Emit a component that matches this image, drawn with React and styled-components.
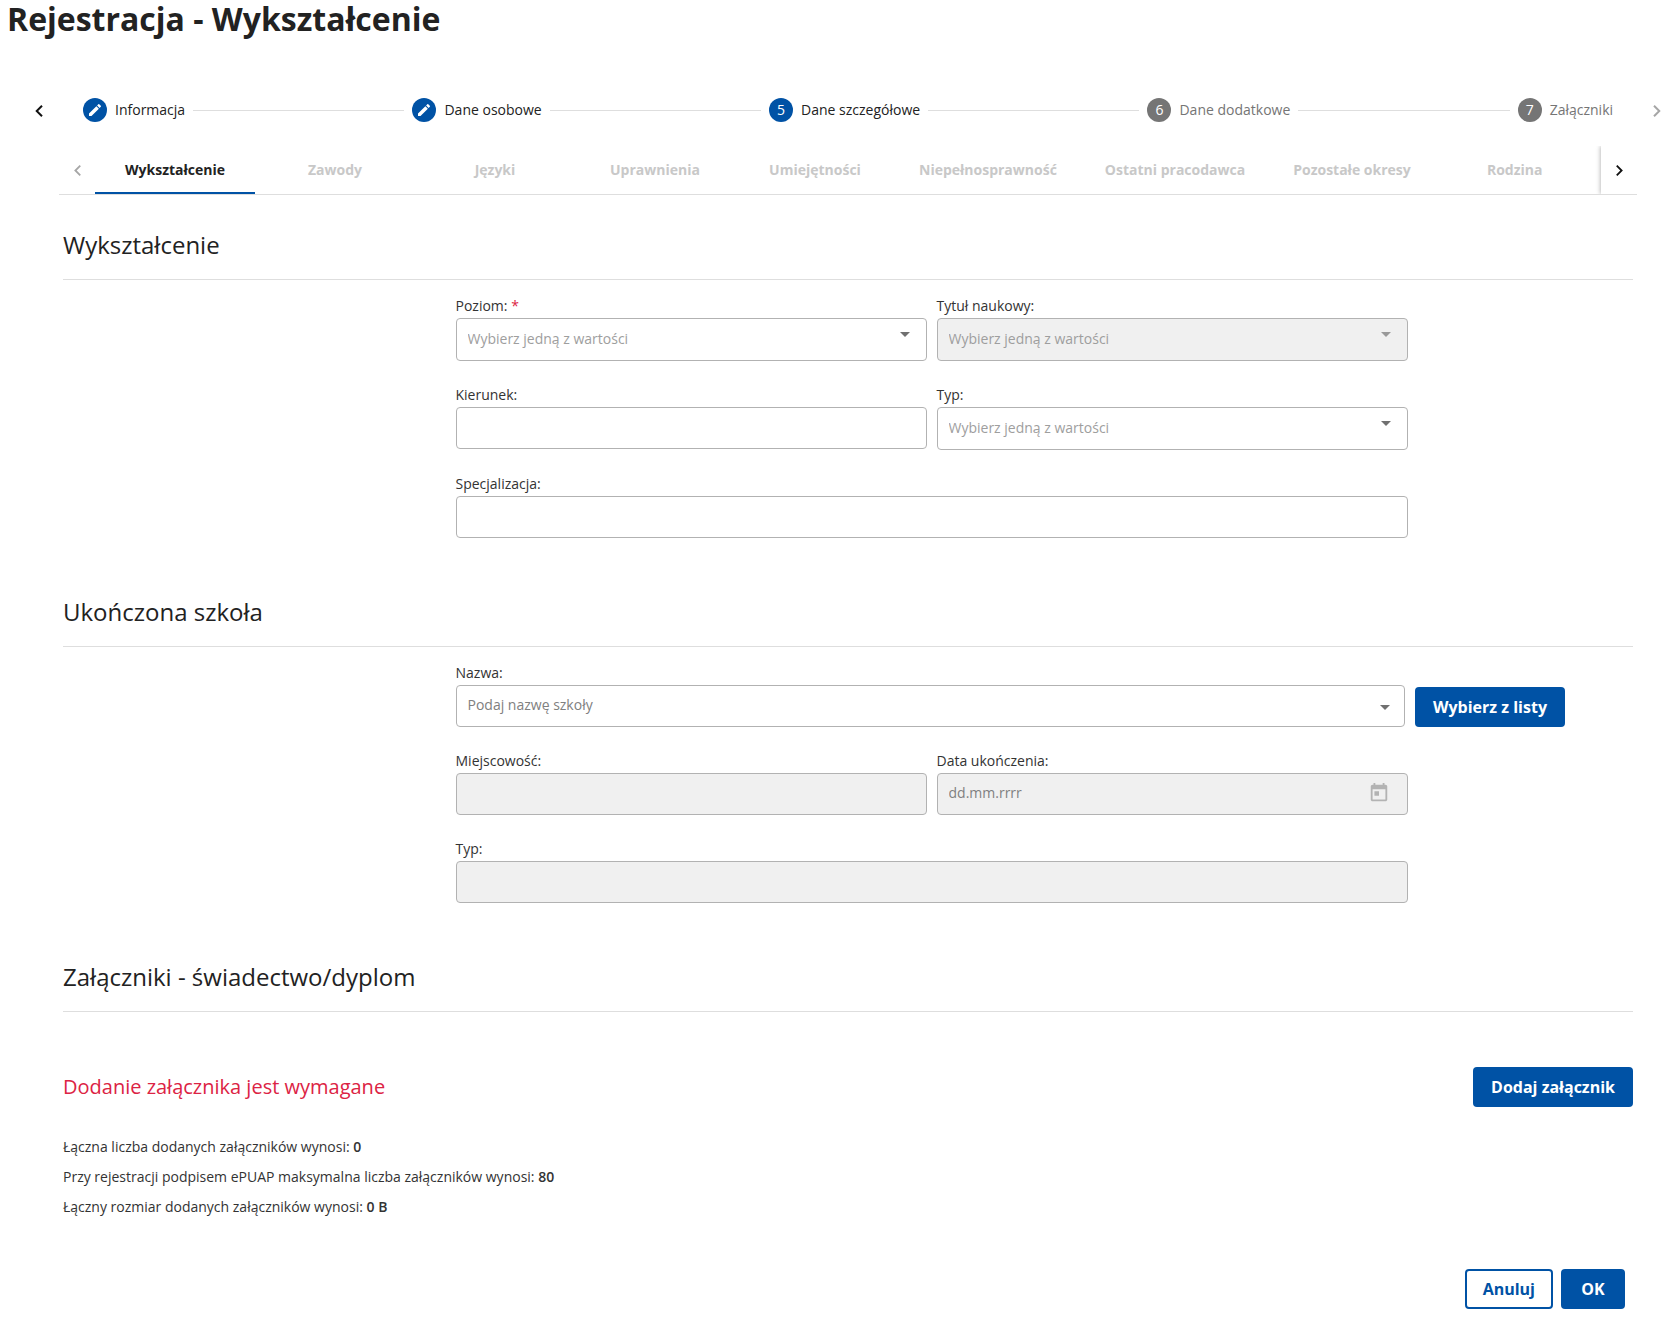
import React from 'react';
import styled, { createGlobalStyle } from 'styled-components';

const blue = '#0052a5';
const ink = '#222222';
const softInk = '#333333';
const line = '#dedede';
const red = '#dc2344';

const GlobalStyle = createGlobalStyle`
  *, *::before, *::after { box-sizing: border-box; }
  body {
    margin: 0;
    background: #ffffff;
    color: ${ink};
    font-family: "Open Sans", "Noto Sans", sans-serif;
    font-size: 14px;
    line-height: 22px;
  }
  button, input, select { font: inherit; color: inherit; }
`;

const PageTitle = styled.h1`
  margin: 0 0 60px;
  padding: 0 7px;
  font-size: 32px;
  line-height: 38px;
  font-weight: 700;
`;

const IconButton = styled.button`
  display: flex;
  align-items: center;
  justify-content: center;
  flex: none;
  width: 14px;
  height: 24px;
  padding: 2px 0 0;
  border: 0;
  background: none;
  color: ${(p) => (p.disabled ? '#a6a6a6' : '#111111')};
`;

const StepperBar = styled.nav`
  display: flex;
  align-items: center;
  gap: 37px;
  padding-left: 32px;
`;

const StepList = styled.ol`
  display: flex;
  align-items: center;
  flex: 1;
  gap: 8px;
  min-width: 0;
  margin: 0;
  padding: 0;
  list-style: none;
`;

const Step = styled.li`
  display: flex;
  align-items: center;
  gap: 8px;
  flex: ${(p) => (p.$last ? 'none' : 'auto')};
  color: ${(p) => (p.$upcoming ? '#757575' : ink)};
  white-space: nowrap;

  &:not(:last-child)::after {
    content: '';
    flex: 1;
    border-top: 1px solid ${line};
  }
`;

const StepBadge = styled.span`
  display: flex;
  align-items: center;
  justify-content: center;
  width: 24px;
  height: 24px;
  border-radius: 50%;
  background: ${(p) => (p.$upcoming ? '#757575' : blue)};
  color: #ffffff;
`;

const TabBar = styled.div`
  display: flex;
  margin: 24px 27px 0 59px;
  border-bottom: 1px solid ${line};
`;

const TabPager = styled(IconButton)`
  width: 36px;
  height: 48px;
  padding: 0;
  background: #ffffff;
  box-shadow: ${(p) => (p.disabled ? 'none' : '-1px 0 4px rgba(0, 0, 0, 0.25)')};
  clip-path: inset(0 0 0 -8px);
`;

const TabList = styled.div`
  display: flex;
  flex: 1;
  min-width: 0;
  overflow: hidden;
`;

const Tab = styled.button`
  flex: none;
  min-width: 160px;
  height: 48px;
  padding: 2px 24px 0;
  border: 0;
  border-bottom: 2px solid ${(p) => (p.$active ? blue : 'transparent')};
  background: none;
  font-weight: 700;
  color: ${(p) => (p.$active ? ink : '#c8c8c8')};
  white-space: nowrap;
`;

const Content = styled.main`
  padding: 34px 31px 14px 63px;
`;

const Section = styled.section`
  & + & { margin-top: 58px; }
`;

const SectionTitle = styled.h2`
  margin: 0;
  padding-bottom: 18px;
  border-bottom: 1px solid ${line};
  font-size: 24px;
  line-height: 32px;
  font-weight: 400;
`;

const FieldGrid = styled.div`
  display: grid;
  grid-template-columns: 40% 40%;
  column-gap: 10px;
  row-gap: 24px;
  padding: ${(p) => (p.$continued ? 0 : 16)}px 0 0 25%;
`;

const Wide = styled.div`
  grid-column: 1 / -1;
`;

const SchoolRow = styled.div`
  display: flex;
  align-items: flex-end;
  gap: 10px;
  padding: 16px 68px 24px 25%;
`;

const FieldBox = styled.div`
  display: flex;
  flex-direction: column;
  flex: 1;
  min-width: 0;
`;

const Label = styled.label`
  padding-bottom: 2px;
  line-height: 20px;
  color: ${softInk};
`;

const Required = styled.span`
  color: ${red};
`;

const Control = styled.div`
  position: relative;
  display: flex;
`;

const TextInput = styled.input`
  width: 100%;
  height: 42px;
  padding: 0 11px 4px;
  border: 1px solid #b2b2b2;
  border-radius: 4px;
  background: #ffffff;

  &::placeholder { color: #808080; opacity: 1; }
  &:disabled { background: #f0f0f0; }
`;

const Select = styled.select`
  width: 100%;
  height: 43px;
  padding: 0 11px 2px;
  border: 1px solid #b2b2b2;
  border-radius: 4px;
  background: #ffffff;
  color: #9e9e9e;
  appearance: none;

  &:disabled { background: #f0f0f0; opacity: 1; }
`;

const Adornment = styled.span`
  position: absolute;
  top: ${(p) => p.$top}px;
  right: ${(p) => p.$right}px;
  display: flex;
  color: ${(p) => (p.$muted ? '#999999' : '#707070')};
  pointer-events: none;
`;

const DateButton = styled.button`
  position: absolute;
  top: 9px;
  right: 18px;
  display: flex;
  padding: 0;
  border: 0;
  background: none;
  color: #b3b3b3;
`;

const Button = styled.button`
  flex: none;
  min-width: 64px;
  height: 40px;
  padding: 0 ${(p) => (p.$outlined ? 16 : 18)}px;
  border: ${(p) => (p.$outlined ? `2px solid ${blue}` : '0')};
  border-radius: 4px;
  background: ${(p) => (p.$outlined ? '#ffffff' : blue)};
  color: ${(p) => (p.$outlined ? blue : '#ffffff')};
  font-size: 16px;
  font-weight: 700;
  white-space: nowrap;
`;

const AttachmentBar = styled.div`
  display: flex;
  align-items: center;
  justify-content: space-between;
  margin: 55px 0 25px;
`;

const Warning = styled.p`
  margin: 0;
  font-size: 20px;
  line-height: 28px;
  color: ${red};
`;

const Summary = styled.p`
  margin: 0;
  line-height: 30px;
  color: ${softInk};

  strong { font-weight: 600; }
`;

const Actions = styled.div`
  display: flex;
  justify-content: flex-end;
  gap: 8px;
  margin-top: 47px;
  padding-right: 8px;
`;

function Chevron({ right, small }) {
  return (
    <svg width={small ? 7 : 8} height={small ? 11 : 12} viewBox="8 6 7.41 12" aria-hidden="true">
      <path
        fill="currentColor"
        d={right ? 'M9.41 6L8 7.41 12.58 12 8 16.59 9.41 18l6-6z' : 'M15.41 7.41L14 6l-6 6 6 6 1.41-1.41L10.83 12z'}
      />
    </svg>
  );
}

function Pencil() {
  return (
    <svg width="16" height="16" viewBox="0 0 24 24" aria-hidden="true">
      <path
        fill="currentColor"
        d="M3 17.25V21h3.75L17.81 9.94l-3.75-3.75L3 17.25zM20.71 7.04a1 1 0 0 0 0-1.41l-2.34-2.34a1 1 0 0 0-1.41 0l-1.83 1.83 3.75 3.75 1.83-1.83z"
      />
    </svg>
  );
}

function Caret() {
  return (
    <svg width="10" height="5" viewBox="0 0 10 5" aria-hidden="true">
      <path fill="currentColor" d="M0 0h10L5 5z" />
    </svg>
  );
}

function Calendar() {
  return (
    <svg width="22" height="22" viewBox="0 0 24 24" aria-hidden="true">
      <path
        fill="currentColor"
        d="M19 3h-1V1h-2v2H8V1H6v2H5c-1.11 0-1.99.9-1.99 2L3 19c0 1.1.89 2 2 2h14c1.1 0 2-.9 2-2V5c0-1.1-.9-2-2-2zm0 16H5V8h14v11zM7 10h5v5H7z"
      />
    </svg>
  );
}

function Field({ id, label, required, children }) {
  return (
    <FieldBox>
      <Label htmlFor={id}>
        {label}
        {required && <Required> *</Required>}
      </Label>
      <Control>{children}</Control>
    </FieldBox>
  );
}

function TextField({ id, label, disabled }) {
  return (
    <Field id={id} label={label}>
      <TextInput id={id} type="text" disabled={disabled} />
    </Field>
  );
}

function SelectField({ id, label, required, disabled }) {
  return (
    <Field id={id} label={label} required={required}>
      <Select id={id} disabled={disabled} defaultValue="">
        <option value="">Wybierz jedną z wartości</option>
      </Select>
      <Adornment $top={14} $right={17} $muted={disabled}>
        <Caret />
      </Adornment>
    </Field>
  );
}

const steps = [
  { label: 'Informacja', done: true },
  { label: 'Dane osobowe', done: true },
  { label: 'Dane szczegółowe', number: 5 },
  { label: 'Dane dodatkowe', number: 6, upcoming: true },
  { label: 'Załączniki', number: 7, upcoming: true },
];

const tabs = [
  'Wykształcenie',
  'Zawody',
  'Języki',
  'Uprawnienia',
  'Umiejętności',
  'Niepełnosprawność',
  'Ostatni pracodawca',
  'Pozostałe okresy',
  'Rodzina',
];

const totals = [
  ['Łączna liczba dodanych załączników wynosi:', '0'],
  ['Przy rejestracji podpisem ePUAP maksymalna liczba załączników wynosi:', '80'],
  ['Łączny rozmiar dodanych załączników wynosi:', '0 B'],
];

export default function App() {
  return (
    <>
      <GlobalStyle />
      <PageTitle>Rejestracja - Wykształcenie</PageTitle>

      <StepperBar aria-label="Kroki rejestracji">
        <IconButton type="button" aria-label="Poprzedni krok">
          <Chevron />
        </IconButton>
        <StepList>
          {steps.map((step, i) => (
            <Step key={step.label} $upcoming={step.upcoming} $last={i === steps.length - 1}>
              <StepBadge $upcoming={step.upcoming}>{step.done ? <Pencil /> : step.number}</StepBadge>
              <span>{step.label}</span>
            </Step>
          ))}
        </StepList>
        <IconButton type="button" aria-label="Następny krok" disabled>
          <Chevron right />
        </IconButton>
      </StepperBar>

      <TabBar>
        <TabPager type="button" aria-label="Poprzednie zakładki" disabled>
          <Chevron small />
        </TabPager>
        <TabList role="tablist">
          {tabs.map((tab, i) => (
            <Tab key={tab} type="button" role="tab" aria-selected={i === 0} disabled={i > 0} $active={i === 0}>
              {tab}
            </Tab>
          ))}
        </TabList>
        <TabPager type="button" aria-label="Następne zakładki">
          <Chevron right small />
        </TabPager>
      </TabBar>

      <Content>
        <Section>
          <SectionTitle>Wykształcenie</SectionTitle>
          <FieldGrid>
            <SelectField id="level" label="Poziom:" required />
            <SelectField id="degree" label="Tytuł naukowy:" disabled />
            <TextField id="major" label="Kierunek:" />
            <SelectField id="kind" label="Typ:" />
            <Wide>
              <TextField id="specialization" label="Specjalizacja:" />
            </Wide>
          </FieldGrid>
        </Section>

        <Section>
          <SectionTitle>Ukończona szkoła</SectionTitle>
          <SchoolRow>
            <Field id="school" label="Nazwa:">
              <TextInput id="school" type="text" placeholder="Podaj nazwę szkoły" />
              <Adornment $top={20} $right={15}>
                <Caret />
              </Adornment>
            </Field>
            <Button type="button">Wybierz z listy</Button>
          </SchoolRow>
          <FieldGrid $continued>
            <TextField id="city" label="Miejscowość:" disabled />
            <Field id="graduated" label="Data ukończenia:">
              <TextInput id="graduated" type="text" placeholder="dd.mm.rrrr" disabled />
              <DateButton type="button" aria-label="Wybierz datę" disabled>
                <Calendar />
              </DateButton>
            </Field>
            <Wide>
              <TextField id="school-kind" label="Typ:" disabled />
            </Wide>
          </FieldGrid>
        </Section>

        <Section>
          <SectionTitle>Załączniki - świadectwo/dyplom</SectionTitle>
          <AttachmentBar>
            <Warning>Dodanie załącznika jest wymagane</Warning>
            <Button type="button">Dodaj załącznik</Button>
          </AttachmentBar>
          {totals.map(([label, value]) => (
            <Summary key={label}>
              {label} <strong>{value}</strong>
            </Summary>
          ))}
        </Section>

        <Actions>
          <Button type="button" $outlined>
            Anuluj
          </Button>
          <Button type="button">OK</Button>
        </Actions>
      </Content>
    </>
  );
}
